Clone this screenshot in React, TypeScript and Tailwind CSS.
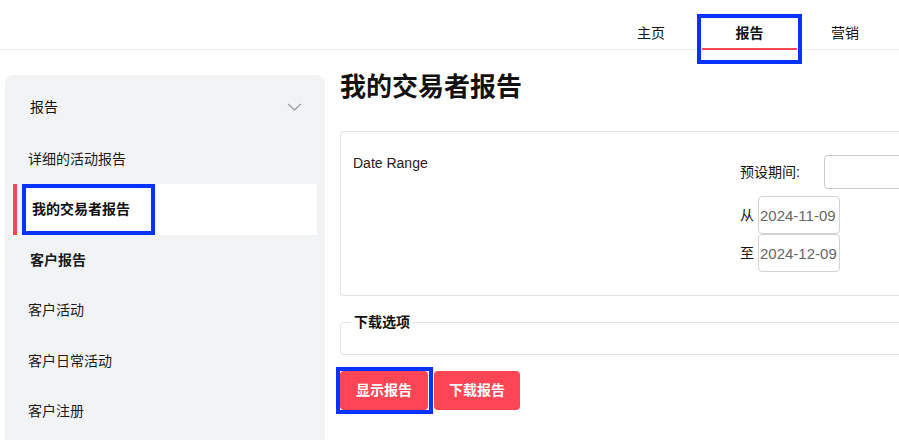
import React from "react";

const RED = "bg-[#fe4555]";

function NavItem({ label, active }: { label: string; active?: boolean }) {
  if (active) {
    return (
      <div className="relative z-10 w-[95px] h-[40px] outline-4 outline-offset-1 outline-[#0433ff]">
        <div className="h-[31px] border-b-2 border-[#fe4555] flex items-center justify-center font-bold text-[14px] text-[#111]">
          {label}
        </div>
      </div>
    );
  }
  return (
    <div className="w-[96px] h-[29px] flex items-center justify-center text-[14px] text-[#111]">
      {label}
    </div>
  );
}

function SideRow({ label, bold, h = "h-[50px]", pl = "pl-[23px]" }: { label: string; bold?: boolean; h?: string; pl?: string }) {
  return (
    <div className={`${h} ${pl} flex items-center text-[14px] text-[#1a1a1a] ${bold ? "font-bold" : ""}`}>
      {label}
    </div>
  );
}

function DateInput({ label, value }: { label: string; value: string }) {
  return (
    <div className="flex items-center">
      <span className="w-[18px]">{label}</span>
      <input
        readOnly
        defaultValue={value}
        className="w-[82px] h-[38px] border border-[#d3d3d3] rounded-[4px] px-[1px] text-[15px] text-[#666] outline-none"
      />
    </div>
  );
}

export default function App() {
  return (
    <div className="w-[899px] h-[440px] overflow-hidden bg-white font-['Liberation_Sans','Noto_Sans_CJK_SC',sans-serif] text-[#111]">
      {/* Top nav */}
      <div className="h-[50px] border-b border-[#ededed] flex justify-end items-start pt-[19px] pr-[6px]">
        <NavItem label="主页" />
        <div className="w-[3px]" />
        <NavItem label="报告" active />
        <NavItem label="营销" />
      </div>

      <div className="flex pt-[25px]">
        {/* Sidebar */}
        <aside className="ml-[5px] w-[320px] h-[365px] bg-[#f2f3f5] rounded-t-lg shrink-0">
          <div className="h-[59px] pt-[5px] pl-[25px] pr-[23px] flex items-center justify-between text-[14px]">
            <span>报告</span>
            <svg width="15" height="8" viewBox="0 0 15 8" fill="none" stroke="#9a9a9a" strokeWidth="1.2">
              <path d="M1 1l6.5 6 6.5-6" />
            </svg>
          </div>
          <SideRow label="详细的活动报告" />
          <div className="h-[51px] flex">
            <div className={`ml-[8px] w-[4px] ${RED}`} />
            <div className="ml-[5px] w-[295px] bg-white">
              <div className="w-[133px] h-full border-4 border-[#0433ff] pl-[6px] flex items-center font-bold text-[14px]">
                我的交易者报告
              </div>
            </div>
          </div>
          <SideRow label="客户报告" bold pl="pl-[25px]" />
          <SideRow label="客户活动" h="h-[51px]" />
          <SideRow label="客户日常活动" />
          <SideRow label="客户注册" />
        </aside>

        {/* Main */}
        <main className="ml-[15px] w-[700px] shrink-0">
          <h1 className="-mt-[1px] leading-[26px] text-[26px] font-bold">我的交易者报告</h1>

          <div className="mt-[31px] h-[165px] border border-[#e3e3e3] rounded flex pl-[12px]">
            <div className="w-[387px] shrink-0 pt-[21px] text-[14px] leading-[20px] text-[#222]">Date Range</div>
            <div className="shrink-0 pt-[23px] text-[14px]">
              <div className="flex items-center">
                <span className="w-[84px]">预设期间:</span>
                <div className="w-[150px] h-[34px] border border-[#cccccc] rounded-[4px] bg-white" />
              </div>
              <div className="mt-[7px]">
                <DateInput label="从" value="2024-11-09" />
              </div>
              <DateInput label="至" value="2024-12-09" />
            </div>
          </div>

          <fieldset className="mt-[16px] h-[43px] border border-[#e3e3e3] rounded pl-[10px]">
            <legend className="px-[3px] text-[14px] leading-[20px] font-bold">下载选项</legend>
          </fieldset>

          <div className="mt-[16px] flex gap-[5px]">
            <div className="w-[89px] h-[39px] outline-4 outline-[#0433ff]">
              <button className={`w-[88px] h-[39px] rounded-[4px] ${RED} text-white text-[14px] font-bold`}>
                显示报告
              </button>
            </div>
            <button className={`w-[86px] h-[39px] rounded-[4px] ${RED} text-white text-[14px] font-bold`}>
              下载报告
            </button>
          </div>
        </main>
      </div>
    </div>
  );
}
